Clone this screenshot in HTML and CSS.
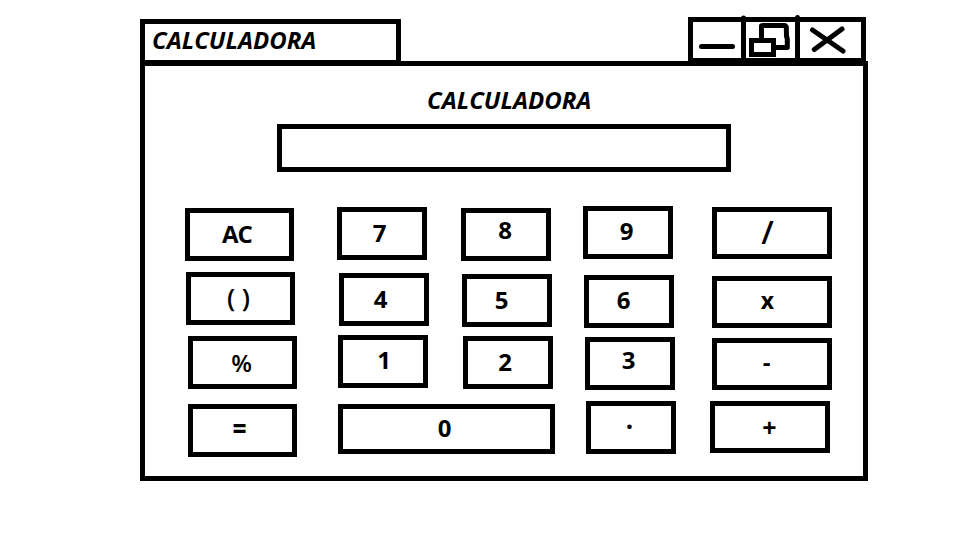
FILE: index.html
```html
<!DOCTYPE html>
<html lang="es">
<head>
<meta charset="utf-8">
<title>Calculadora</title>
<link rel="stylesheet" href="styles.css">
</head>
<body>
<main class="app">
  <header class="titlebar">
    <div class="tab"><span class="title">CALCULADORA</span></div>
    <div class="controls">
      <div class="control minimize"><svg width="48" height="36"><path d="M8.5 24.5H39.5"/></svg></div>
      <div class="control restore"><svg width="49" height="36"><path d="M-2.5 -4V-3.5M15.5 17V3.8L18 3.5H39L40.3 5L40.5 14L41.3 17V25.5H29"/><path class="square" d="M5.5 18.5H27.5V32.5H5.5Z"/></svg></div>
      <div class="control close"><svg width="61" height="36"><path d="M-2.5 -4.5V-4M12.5 8L43 29M42 7L14.3 27.5"/></svg></div>
    </div>
  </header>
  <section class="window">
    <h1 class="title heading">CALCULADORA</h1>
    <div class="display"></div>
    <div class="keys">
      <div class="key wide k-ac"><span>AC</span></div>
      <div class="key k-7"><span>7</span></div>
      <div class="key k-8"><span>8</span></div>
      <div class="key k-9"><span>9</span></div>
      <div class="key operator k-div"><span>/</span></div>

      <div class="key wide k-par"><span>( )</span></div>
      <div class="key k-4"><span>4</span></div>
      <div class="key k-5"><span>5</span></div>
      <div class="key k-6"><span>6</span></div>
      <div class="key operator k-mul"><span>x</span></div>

      <div class="key wide k-pct"><span>%</span></div>
      <div class="key k-1"><span>1</span></div>
      <div class="key k-2"><span>2</span></div>
      <div class="key k-3"><span>3</span></div>
      <div class="key operator k-sub"><span>-</span></div>

      <div class="key wide k-eq"><span>=</span></div>
      <div class="key zero k-0"><span>0</span></div>
      <div class="key k-dot"><span>·</span></div>
      <div class="key operator k-add"><span>+</span></div>
    </div>
  </section>
</main>
</body>
</html>
```
FILE: styles.css
```css
* { box-sizing: border-box; }

body {
  margin: 0;
  background: #fff;
  color: #000;
  font: 700 24px/24px "Open Sans", "Noto Sans", sans-serif;
}

.app {
  width: 728px;
  margin-left: 140px;
  padding-top: 17px;
}

.titlebar {
  display: flex;
  justify-content: space-between;
  align-items: flex-start;
  height: 44px;
}

.tab {
  width: 261px;
  height: 46px;
  margin-top: 2px;
  padding: 4px 0 0 7px;
  border: 5px solid #000;
}

.title {
  display: block;
  font-size: 24px;
  line-height: 24px;
  font-style: italic;
  font-weight: 700;
  white-space: nowrap;
}

.controls {
  display: flex;
  height: 46px;
  margin-right: 2px;
  border: 5px solid #000;
}

.control { height: 36px; }
.control + .control { border-left: 5px solid #000; }

.control svg {
  display: block;
  overflow: visible;
  fill: none;
  stroke: #000;
  stroke-width: 5;
  stroke-linecap: round;
  stroke-linejoin: round;
}

.control .square {
  fill: #fff;
  stroke-linejoin: miter;
}

.window {
  height: 420px;
  padding-top: 22px;
  border: 5px solid #000;
}

.heading {
  margin: 0 0 12px 282px;
}

.display {
  width: 454px;
  height: 48px;
  margin-left: 132px;
  border: 5px solid #000;
}

.keys {
  display: grid;
  grid-template-columns: 152px 124px 122px 127px 122px;
  grid-template-rows: 66px 63px 66px 56px;
  align-items: start;
  justify-content: start;
  margin: 34px 0 0 40px;
}

.key {
  width: 90px;
  height: 53px;
  border: 5px solid #000;
}

.key span {
  display: block;
  width: 40px;
  text-align: center;
  white-space: nowrap;
}

.wide { width: 109px; }
.operator { width: 120px; height: 52px; }
.zero { grid-column: span 2; width: 217px; height: 50px; }

/* Hand-placed keys: margin shifts the box, padding sets its label. */
.k-ac  { margin: 2px 0 0 0;   padding: 9px 0 0 27px; letter-spacing: -1px; }
.k-7   { margin: 1px 0 0 0;   padding: 9px 0 0 17.5px; }
.k-8   { margin: 2px 0 0 0;   padding: 5px 0 0 19px; }
.k-9   { margin: 0;           padding: 8px 0 0 18.5px; }
.k-div { margin: 1px 0 0 2px; padding: 8px 0 0 30.5px; font-size: 32px; font-weight: 600; }

.k-par { margin: 0 0 0 1px;   padding: 8px 0 0 27.5px; font-size: 26px; font-weight: 600; }
.k-4   { margin: 1px 0 0 2px; padding: 9px 0 0 16.5px; }
.k-5   { margin: 2px 0 0 1px; padding: 9px 0 0 14.5px; }
.k-6   { margin: 3px 0 0 1px; padding: 8px 0 0 14.5px; }
.k-mul { margin: 4px 0 0 2px; padding: 7px 0 0 30.5px; font-size: 23px; }

.k-pct { margin: 1px 0 0 3px; padding: 10px 0 0 28.5px; font-weight: 600; }
.k-1   { margin: 0 0 0 1px;   padding: 8px 0 0 21px; }
.k-2   { margin: 1px 0 0 2px; padding: 9px 0 0 17px; }
.k-3   { margin: 2px 0 0 2px; padding: 6px 0 0 18.5px; }
.k-sub { margin: 3px 0 0 2px; padding: 7px 0 0 29.5px; }

.k-eq  { margin: 3px 0 0 3px; padding: 7px 0 0 26.5px; font-weight: 800; }
.k-0   { margin: 3px 0 0 1px; padding: 7px 0 0 81.5px; }
.k-dot { margin: 0 0 0 3px;   padding: 8px 0 0 18.5px; font-size: 26px; }
.k-add { margin: 0;           padding: 9px 0 0 34.5px; font-size: 25px; }
```
